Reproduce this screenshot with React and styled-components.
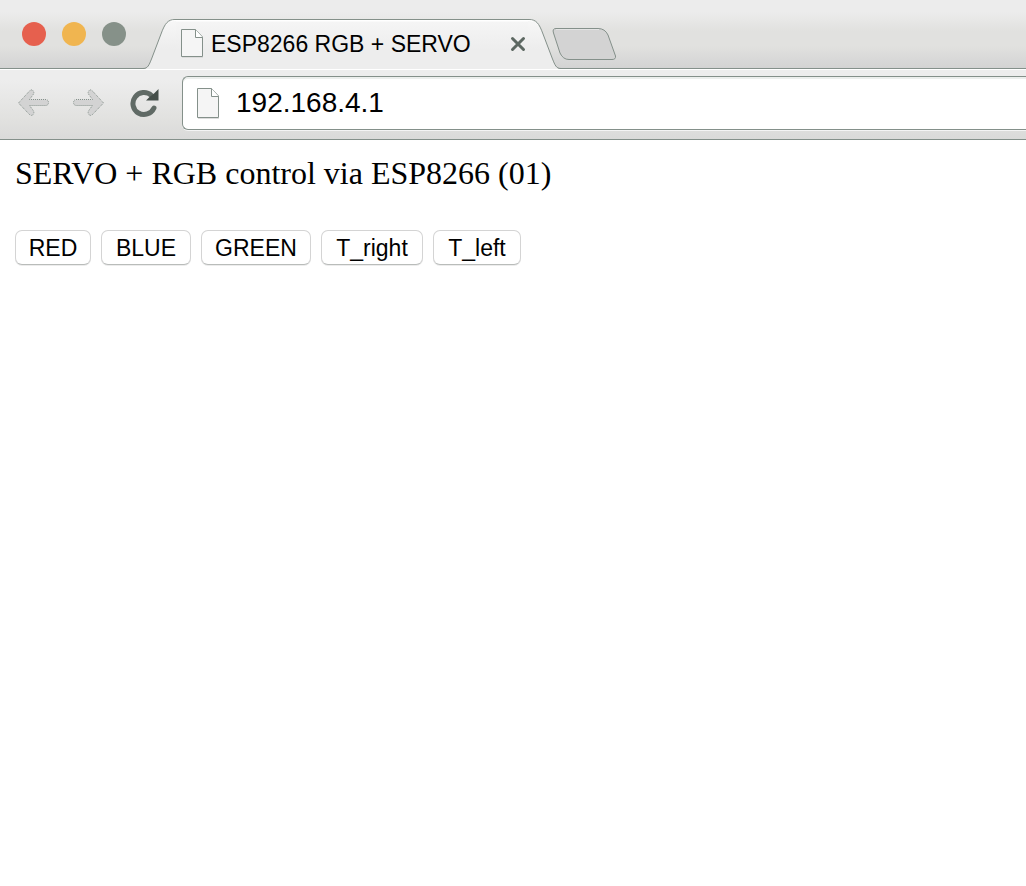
import React, { useState } from "react";
import styled, { createGlobalStyle } from "styled-components";

const line = "#84908a";
const sans = '"Liberation Sans", Arial, Helvetica, sans-serif';

const GlobalStyle = createGlobalStyle`
  *, *::before, *::after { box-sizing: border-box; }
  body { margin: 0; background: #fff; color: #000; }
  svg { display: block; flex: none; }
  button { font: inherit; color: inherit; }
`;

const TabStrip = styled.header`
  display: flex;
  align-items: flex-end;
  height: 69px;
  background: linear-gradient(#ececec 12px, #e1e1df 31px, #e1e1df 46px, #d3d3d3 68px);
  box-shadow: inset 0 -1px ${line};
`;

const WindowControls = styled.div`
  display: flex;
  align-self: flex-start;
  gap: 16px;
  padding: 22px 14px 0 22px;
`;

const Light = styled.button`
  width: 24px;
  height: 24px;
  padding: 0;
  border: 0;
  border-radius: 50%;
  background: ${(p) => p.$color};
`;

const Tab = styled.div`
  display: flex;
  height: 50px;
  min-width: 0;
`;

const TabBody = styled.div`
  display: flex;
  align-items: center;
  width: 352px;
  min-width: 0;
  padding: 0 1px 2px 5px;
  border-top: 1px solid ${line};
  background: linear-gradient(#fff 1px, #f5f5f5 2px, #ededed 30px);
  font: 23px/28px ${sans};
`;

const TabTitle = styled.span`
  flex: 1;
  min-width: 0;
  margin-left: 7px;
  overflow: hidden;
  white-space: nowrap;
`;

const IconButton = styled.button`
  display: flex;
  padding: 0;
  border: 0;
  background: none;
`;

const NewTab = styled(IconButton)`
  align-self: flex-start;
  margin: 27px 0 0 -12px;
`;

const Toolbar = styled.nav`
  display: flex;
  align-items: center;
  height: 71px;
  padding: 5px 0 8px 17px;
  border-top: 1px solid #fff;
  border-bottom: 1px solid ${line};
  background: linear-gradient(#ededed 10px, #e1e1df 50px, #dadad9);
`;

const NavButtons = styled.div`
  display: flex;
  align-items: center;
  gap: 22px;
  margin-right: 22px;
`;

const AddressBar = styled.label`
  display: flex;
  flex: 1;
  align-items: center;
  gap: 16px;
  min-width: 0;
  height: 54px;
  padding-left: 14px;
  border: 1px solid ${line};
  border-right: 0;
  border-radius: 6px 0 0 6px;
  background: #fff;
  box-shadow: inset 0 2px #ecefed, 0 1px #f4f4f4;
`;

const AddressInput = styled.input`
  flex: 1;
  min-width: 0;
  padding: 0;
  border: 0;
  outline: 0;
  background: none;
  color: #000;
  font: 28px/32px ${sans};
`;

const Page = styled.main`
  padding: 15px;
`;

const Heading = styled.p`
  margin: 0 0 39px;
  font: 32px/36px "Liberation Serif", "Times New Roman", serif;
`;

const Controls = styled.div`
  display: flex;
  flex-wrap: wrap;
  gap: 10px;
`;

const ControlButton = styled.button`
  min-width: ${(p) => p.$width}px;
  height: 35px;
  padding: 0;
  border: 1px solid #d4d4d4;
  border-bottom-color: #b9bcba;
  border-radius: 7px;
  background: #fff;
  box-shadow: 0 1px #ececec;
  font: 23px/32px ${sans};
`;

const PageIcon = ({ height = 28 }) => (
  <svg width="23" height={height + 1} viewBox={`0 0 23 ${height + 1}`} aria-hidden="true">
    <path d={`M.5 .5H14.5L21.5 8V${height - 0.5}H.5Z`} fill="#f5f5f5" stroke={line} />
    <path d="M14.5 .5V8.5H21.5" fill="#fff" stroke={line} />
    <path d={`M1 ${height + 0.5}H22`} stroke="#dcdcdc" />
  </svg>
);

const TabEdge = ({ right }) => (
  <svg width="36" height="50" viewBox="0 0 36 50" aria-hidden="true">
    <defs>
      <linearGradient id={right ? "edge-r" : "edge-l"} x1="0" y1="0" x2="0" y2="1">
        <stop offset="0" stopColor="#f7f7f7" />
        <stop offset=".6" stopColor="#ededed" />
      </linearGradient>
    </defs>
    <g transform={right ? "matrix(-1 0 0 1 36 0)" : undefined}>
      <path
        d="M0 50H3C8 49.5 9 46 11.5 40L21 15C25 4 28 .5 35 .5H36V50Z"
        fill={`url(#${right ? "edge-r" : "edge-l"})`}
      />
      <path d="M0 49.5H3C8 49.5 9 46 11.5 40L21 15C25 4 28 .5 35 .5H36" fill="none" stroke={line} />
      <path d="M31 2.5Q33 1.5 36 1.5" fill="none" stroke="#fff" />
    </g>
  </svg>
);

const ArrowIcon = ({ forward }) => (
  <svg width="33" height="30" viewBox="0 0 33 30" aria-hidden="true">
    <path
      transform={forward ? "matrix(-1 0 0 1 33 0)" : undefined}
      d="M1.5 15L12.5 3Q15 .5 16.5 3.5Q17.500 5 15.500 7.500L12.500 11.500H29Q31.500 12 31.500 14.500T29 17.500H12.500L15.500 21.500Q17.500 24 16.500 26Q15 28.500 12.500 26.500Z"
      fill="#d3d3d3"
      stroke={line}
      strokeDasharray="1 1"
    />
  </svg>
);

const ReloadIcon = () => (
  <svg width="33" height="30" viewBox="0 0 33 30" aria-hidden="true">
    <path d="M24.5 7.5A11 11 0 1 0 27 20" fill="none" stroke="#606a65" strokeWidth="5" strokeLinecap="round" />
    <path d="M31.500 1V12.500H19L22.500 9L27 5.500Z" fill="#454f4a" />
  </svg>
);

const lights = [
  ["Close window", "#e6604e"],
  ["Minimize window", "#f0b550"],
  ["Zoom window", "#869189"],
];

const controls = [
  ["RED", 76],
  ["BLUE", 90],
  ["GREEN", 110],
  ["T_right", 102],
  ["T_left", 88],
];

export default function App() {
  const [address, setAddress] = useState("192.168.4.1");
  return (
    <>
      <GlobalStyle />
      <TabStrip>
        <WindowControls>
          {lights.map(([label, color]) => (
            <Light key={label} type="button" aria-label={label} $color={color} />
          ))}
        </WindowControls>
        <Tab>
          <TabEdge />
          <TabBody>
            <PageIcon />
            <TabTitle>ESP8266 RGB + SERVO</TabTitle>
            <IconButton type="button" aria-label="Close tab">
              <svg width="18" height="18" viewBox="0 0 18 18" aria-hidden="true">
                <path d="M3.5 3.5L14.5 14.5M14.5 3.5L3.5 14.5" stroke="#5d6862" strokeWidth="3" strokeLinecap="round" />
              </svg>
            </IconButton>
          </TabBody>
          <TabEdge right />
        </Tab>
        <NewTab type="button" aria-label="New tab">
          <svg width="66" height="34" viewBox="0 0 66 34" aria-hidden="true">
            <path
              d="M4 1.5H46Q53 1.500 56 8L63.500 29Q64 32.500 60 32.500H17Q11 32.500 8 26L1.500 6Q0 1.500 4 1.500Z"
              fill="#d3d3d3"
              stroke={line}
            />
            <path d="M4 2.5H47" stroke="#e4e4e4" />
          </svg>
        </NewTab>
      </TabStrip>
      <Toolbar>
        <NavButtons>
          <IconButton type="button" aria-label="Back">
            <ArrowIcon />
          </IconButton>
          <IconButton type="button" aria-label="Forward">
            <ArrowIcon forward />
          </IconButton>
          <IconButton type="button" aria-label="Reload">
            <ReloadIcon />
          </IconButton>
        </NavButtons>
        <AddressBar>
          <PageIcon height={30} />
          <AddressInput
            type="text"
            aria-label="Address"
            value={address}
            onChange={(e) => setAddress(e.target.value)}
          />
        </AddressBar>
      </Toolbar>
      <Page>
        <Heading>SERVO + RGB control via ESP8266 (01)</Heading>
        <Controls>
          {controls.map(([label, width]) => (
            <ControlButton key={label} type="button" $width={width}>
              {label}
            </ControlButton>
          ))}
        </Controls>
      </Page>
    </>
  );
}
